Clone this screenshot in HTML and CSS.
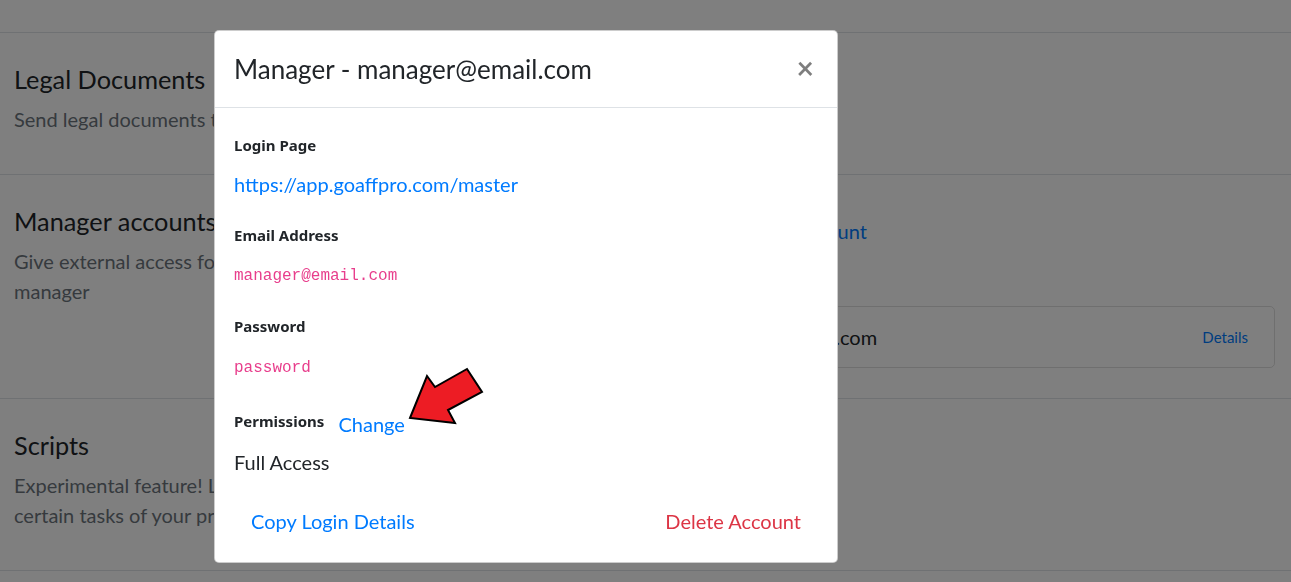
FILE: index.html
```html
<!DOCTYPE html>
<html lang="en">
<head>
<meta charset="utf-8">
<title>Settings</title>
<link rel="stylesheet" href="styles.css">
</head>
<body>
<main class="page">
  <section class="row row-top"></section>
  <section class="row">
    <div class="col-left">
      <h4 class="row-title">Legal Documents</h4>
      <p class="row-desc">Send legal documents to your affiliates for signature</p>
    </div>
    <div class="col-right"></div>
  </section>
  <section class="row">
    <div class="col-left">
      <h4 class="row-title">Manager accounts</h4>
      <p class="row-desc">Give external access for your program to a trusted account manager</p>
    </div>
    <div class="col-right">
      <button class="btn-link add-link" type="button">Create Manager Account</button>
      <div class="account-card">
        <span>manager@email.com</span>
        <button class="btn-link card-link" type="button">Details</button>
      </div>
    </div>
  </section>
  <section class="row">
    <div class="col-left">
      <h4 class="row-title">Scripts</h4>
      <p class="row-desc">Experimental feature! Lets you write scripts to automate certain tasks of your program</p>
    </div>
    <div class="col-right"></div>
  </section>
</main>

<div class="backdrop"></div>

<div class="modal" role="dialog">
  <div class="modal-header">
    <h4 class="modal-title">Manager - manager@email.com</h4>
    <button class="close" type="button" aria-label="Close">&times;</button>
  </div>
  <div class="modal-body">
    <div class="group">
      <label class="field-label">Login Page</label>
      <a class="field-value link" href="#">https://app.goaffpro.com/master</a>
    </div>
    <div class="group group-code">
      <label class="field-label">Email Address</label>
      <code class="field-value code">manager@email.com</code>
    </div>
    <div class="group group-code">
      <label class="field-label">Password</label>
      <code class="field-value code">password</code>
    </div>
    <div class="perm-row">
      <label class="field-label inline">Permissions</label>
      <a class="link change-link" href="#">Change</a>
    </div>
    <div class="field-value">Full Access</div>
  </div>
  <div class="modal-footer">
    <button class="btn-link" type="button">Copy Login Details</button>
    <button class="btn-link danger" type="button">Delete Account</button>
  </div>
</div>

<svg class="arrow" width="90" height="70" viewBox="0 0 90 70" aria-hidden="true">
  <polygon points="10,58 27,16 35,27 67,9 82,32 48,50 55,63" fill="#ed1c24" stroke="#000" stroke-width="2" stroke-linejoin="miter"/>
</svg>
</body>
</html>
```

FILE: styles.css
```css
* { box-sizing: border-box; }

body {
  margin: 0;
  font-family: "Lato", "Noto Sans", "Liberation Sans", sans-serif;
  font-size: 20px;
  line-height: 1.5;
  color: #212529;
  background: #fff;
}

.row {
  display: flex;
  padding: 32px 0 24px;
  border-bottom: 1px solid #dee2e6;
}

.row-top {
  height: 33px;
  padding: 0;
}

.col-left {
  flex: 0 0 50%;
  padding: 0 14px;
}

.col-right {
  flex: 1;
  padding: 0 16px 0 4px;
}

.row-title {
  margin: 0 0 10px;
  font-size: 25.3px;
  font-weight: 400;
  line-height: 29px;
}

.row-desc {
  margin: 0 0 16px;
  max-width: 530px;
  color: #6c757d;
}

.btn-link {
  background: none;
  border: 0;
  font: inherit;
  line-height: 30px;
  color: #007bff;
  padding: 6px 16px;
  cursor: pointer;
}

.add-link {
  display: block;
  padding: 9px 0;
}

.account-card {
  margin: 51px 0 6px;
  border: 1px solid rgba(0, 0, 0, 0.125);
  border-radius: 5px;
  padding: 15px 6px 15px 46px;
  display: flex;
  justify-content: space-between;
  align-items: center;
  line-height: 30px;
}

.card-link {
  font-size: 15px;
  padding: 0 20px;
}

.backdrop {
  position: fixed;
  inset: 0;
  background: rgba(0, 0, 0, 0.5);
}

.modal {
  position: fixed;
  left: 214px;
  top: 30px;
  width: 624px;
  background: #fff;
  border: 1px solid rgba(0, 0, 0, 0.2);
  border-radius: 5px;
}

.modal-header {
  display: flex;
  align-items: flex-start;
  padding: 20px 20px 20px 19px;
  border-bottom: 1px solid #dee2e6;
}

.modal-title {
  margin: 0;
  font-size: 26px;
  font-weight: 400;
  line-height: 36px;
}

.close {
  margin-left: auto;
  background: none;
  border: 0;
  padding: 0 3px;
  font-family: inherit;
  font-size: 30px;
  font-weight: 700;
  line-height: 32px;
  color: #000;
  opacity: 0.5;
  text-shadow: 0 1px 0 #fff;
  cursor: pointer;
}

.modal-body {
  padding: 26px 20px 0 19px;
}

.group {
  margin-bottom: 25px;
}

.field-label {
  display: block;
  font-family: "Noto Sans", "Lato", sans-serif;
  font-size: 15px;
  font-weight: 700;
  line-height: 22.5px;
  margin-bottom: 12px;
}

.group-code .field-label {
  margin-bottom: 14px;
}

.field-label.inline {
  display: inline;
  margin: 0;
  vertical-align: 5px;
}

.field-value {
  display: block;
  line-height: 30px;
}

.link {
  color: #007bff;
  text-decoration: none;
}

.code {
  font-family: "Liberation Mono", "DejaVu Sans Mono", monospace;
  font-size: 16px;
  color: #e83e8c;
  line-height: 27px;
  padding-top: 3px;
}

.perm-row {
  line-height: 30px;
  margin: 27px 0 8px;
}

.change-link {
  margin-left: 9px;
}

.modal-footer {
  display: flex;
  justify-content: space-between;
  padding: 23px 20px 20px;
}

.danger {
  color: #dc3545;
}

.arrow {
  position: absolute;
  left: 400px;
  top: 360px;
}
```
